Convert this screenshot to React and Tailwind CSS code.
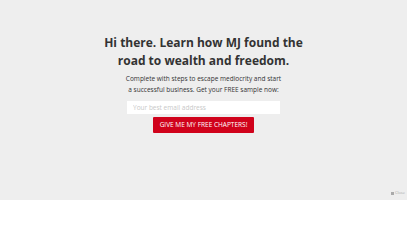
export default function App() {
  return (
    <div className="relative w-[407px] h-[200px] bg-[#eeeeee] overflow-hidden" style={{ fontFamily: '"Open Sans", sans-serif' }}>
      <div className="flex flex-col items-center pt-[34px]">
        <h1 className="text-[12px] leading-[18px] font-bold text-[#333333] text-center">
          Hi there. Learn how MJ found the<br />road to wealth and freedom.
        </h1>
        <p className="mt-[2.5px] text-[6.5px] leading-[11px] text-[#333333] text-center">
          Complete with steps to escape mediocrity and start<br />a successful business. Get your FREE sample now:
        </p>
        <input
          className="mt-[6.5px] w-[153px] h-[13px] bg-white px-[6px] text-[6.5px] placeholder:text-[#c8c8c8] outline-none"
          placeholder="Your best email address"
        />
        <button className="mt-[3px] w-[101px] h-[16px] bg-[#d0021b] rounded-[1px] text-white text-[6.5px] leading-none">
          GIVE ME MY FREE CHAPTERS!
        </button>
      </div>
      <div className="absolute right-[2px] bottom-[4px] flex items-center gap-[1px] text-[4px] text-[#aaaaaa]">
        <span className="w-[3px] h-[3px] bg-[#aaaaaa] inline-block" />
        <span>Close</span>
      </div>
    </div>
  );
}
